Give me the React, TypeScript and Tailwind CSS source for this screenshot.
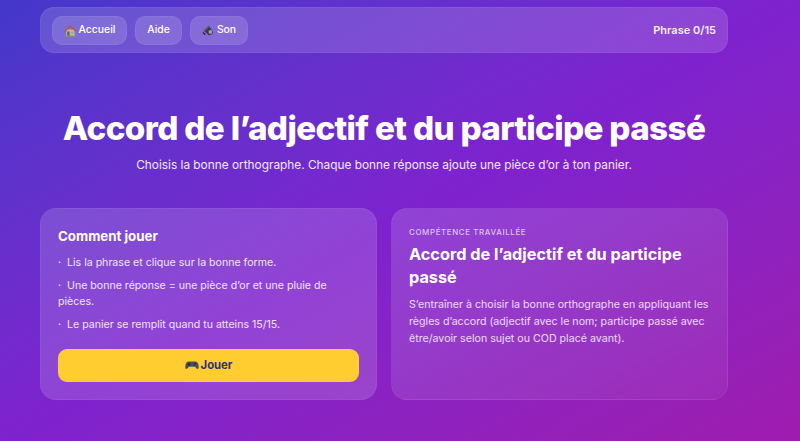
const HomeIcon = () => (
  <svg width="13" height="13" viewBox="0 0 14 14" className="shrink-0">
    <rect x="2.5" y="6" width="9" height="7" fill="#d9b48f" />
    <path d="M0.5 7.500 7 1l6.500 6.500-1 1L7 3.200 1.500 8.500z" fill="#b9573c" />
    <rect x="3.500" y="8" width="2.500" height="5" fill="#6f5a4b" />
    <rect x="7.500" y="8" width="3" height="2.500" fill="#7fb2c9" />
    <rect x="1" y="12.400" width="12" height="1.200" fill="#6fa35c" />
  </svg>
);

const SpeakerIcon = () => (
  <svg width="13" height="13" viewBox="0 0 14 14" className="shrink-0">
    <path d="M1 7.500 7 1.500l1.500 1L4 9z" fill="#59626e" />
    <path d="M3 8 8 3l4 5.500-1 2.500-3.500 1z" fill="#343b45" />
    <circle cx="9" cy="8.500" r="2" fill="#9aa3ad" />
    <path d="M1.500 8.500 4 11l-1 1-2.500-2.500z" fill="#22272e" />
  </svg>
);

const GamepadIcon = () => (
  <svg width="14" height="14" viewBox="0 0 14 14" className="shrink-0">
    <path d="M3.500 3.500h7c1.600 0 2.600 1.400 3 3.500.4 2 .3 3.800-.8 4-.9.2-1.700-1-2.600-2.200H3.900C3 10 2.200 11.200 1.300 11 .2 10.800.1 9 .5 7c.4-2.100 1.400-3.500 3-3.500z" fill="#4b5058" />
    <rect x="2.600" y="5.800" width="3" height="1" fill="#1f2329" />
    <rect x="3.600" y="4.800" width="1" height="3" fill="#1f2329" />
    <circle cx="10.300" cy="5.500" r=".7" fill="#1f2329" />
    <circle cx="9.200" cy="6.800" r=".7" fill="#1f2329" />
  </svg>
);

const navButton =
  "flex h-[29px] items-center justify-center gap-[2px] rounded-[10px] border border-white/5 bg-white/15 text-[10.4px] font-medium text-white";

export default function App() {
  return (
    <div
      className="h-[441px] overflow-hidden bg-linear-to-br from-[#4338ca] via-[#7e22ce] to-[#9f1cae] text-white"
      style={{ fontFamily: "Inter, sans-serif" }}
    >
      <div className="ml-10 w-[688px] pt-[7px]">
        {/* Nav */}
        <nav className="flex h-[46px] items-center justify-between rounded-[14px] border border-white/5 bg-white/15 px-[11px]">
          <div className="flex items-center gap-2">
            <button className={`${navButton} w-[75px]`}>
              <HomeIcon />
              Accueil
            </button>
            <button className={`${navButton} w-[47px]`}>Aide</button>
            <button className={`${navButton} w-[58px]`}>
              <SpeakerIcon />
              Son
            </button>
          </div>
          <span className="text-[11px] font-semibold text-white/90">Phrase 0/15</span>
        </nav>

        {/* Header */}
        <h1 className="mt-[53px] text-center text-[33.25px] leading-[44px] font-extrabold tracking-[-0.02em] whitespace-nowrap">
          Accord de l’adjectif et du participe passé
        </h1>
        <p className="mt-[5px] text-center text-[11.85px] leading-[20px] text-white/90">
          Choisis la bonne orthographe. Chaque bonne réponse ajoute une pièce d’or à ton panier.
        </p>

        {/* Cards */}
        <div className="mt-[33px] grid grid-cols-2 gap-[14px]">
          <section className="h-[192px] rounded-2xl border border-white/5 bg-white/15 px-[17px] pt-[17px]">
            <h2 className="text-[13.3px] leading-[20px] font-bold">Comment jouer</h2>
            <ul className="mt-[9px] text-[10.6px] leading-[16.7px] text-white/85">
              <li className="mt-[5.6px]">·&nbsp;&nbsp;Lis la phrase et clique sur la bonne forme.</li>
              <li className="mt-[6px]">·&nbsp;&nbsp;Une bonne réponse = une pièce d’or et une pluie de pièces.</li>
              <li className="mt-[5.6px]">·&nbsp;&nbsp;Le panier se remplit quand tu atteins 15/15.</li>
            </ul>
            <button className="mt-[15.5px] flex h-[33px] w-full items-center justify-center gap-[2px] rounded-[9px] bg-[#ffcd30] text-[11.300px] font-bold text-[#312e81]">
              <GamepadIcon />
              Jouer
            </button>
          </section>

          <section className="h-[192px] rounded-2xl border border-white/5 bg-linear-to-br from-white/15 to-white/5 px-[17px] pt-[17px]">
            <p className="text-[7.900px] leading-[12px] font-medium tracking-[0.08em] text-white/70">
              COMPÉTENCE TRAVAILLÉE
            </p>
            <h2 className="mt-[5px] text-[16.3px] leading-[22.700px] font-bold">
              Accord de l’adjectif et du participe passé
            </h2>
            <p className="mt-[9px] text-[10.65px] leading-[16.700px] text-white/80">
              S’entraîner à choisir la bonne orthographe en appliquant les règles d’accord (adjectif avec le nom; participe passé avec être/avoir selon sujet ou COD placé avant).
            </p>
          </section>
        </div>
      </div>
    </div>
  );
}
